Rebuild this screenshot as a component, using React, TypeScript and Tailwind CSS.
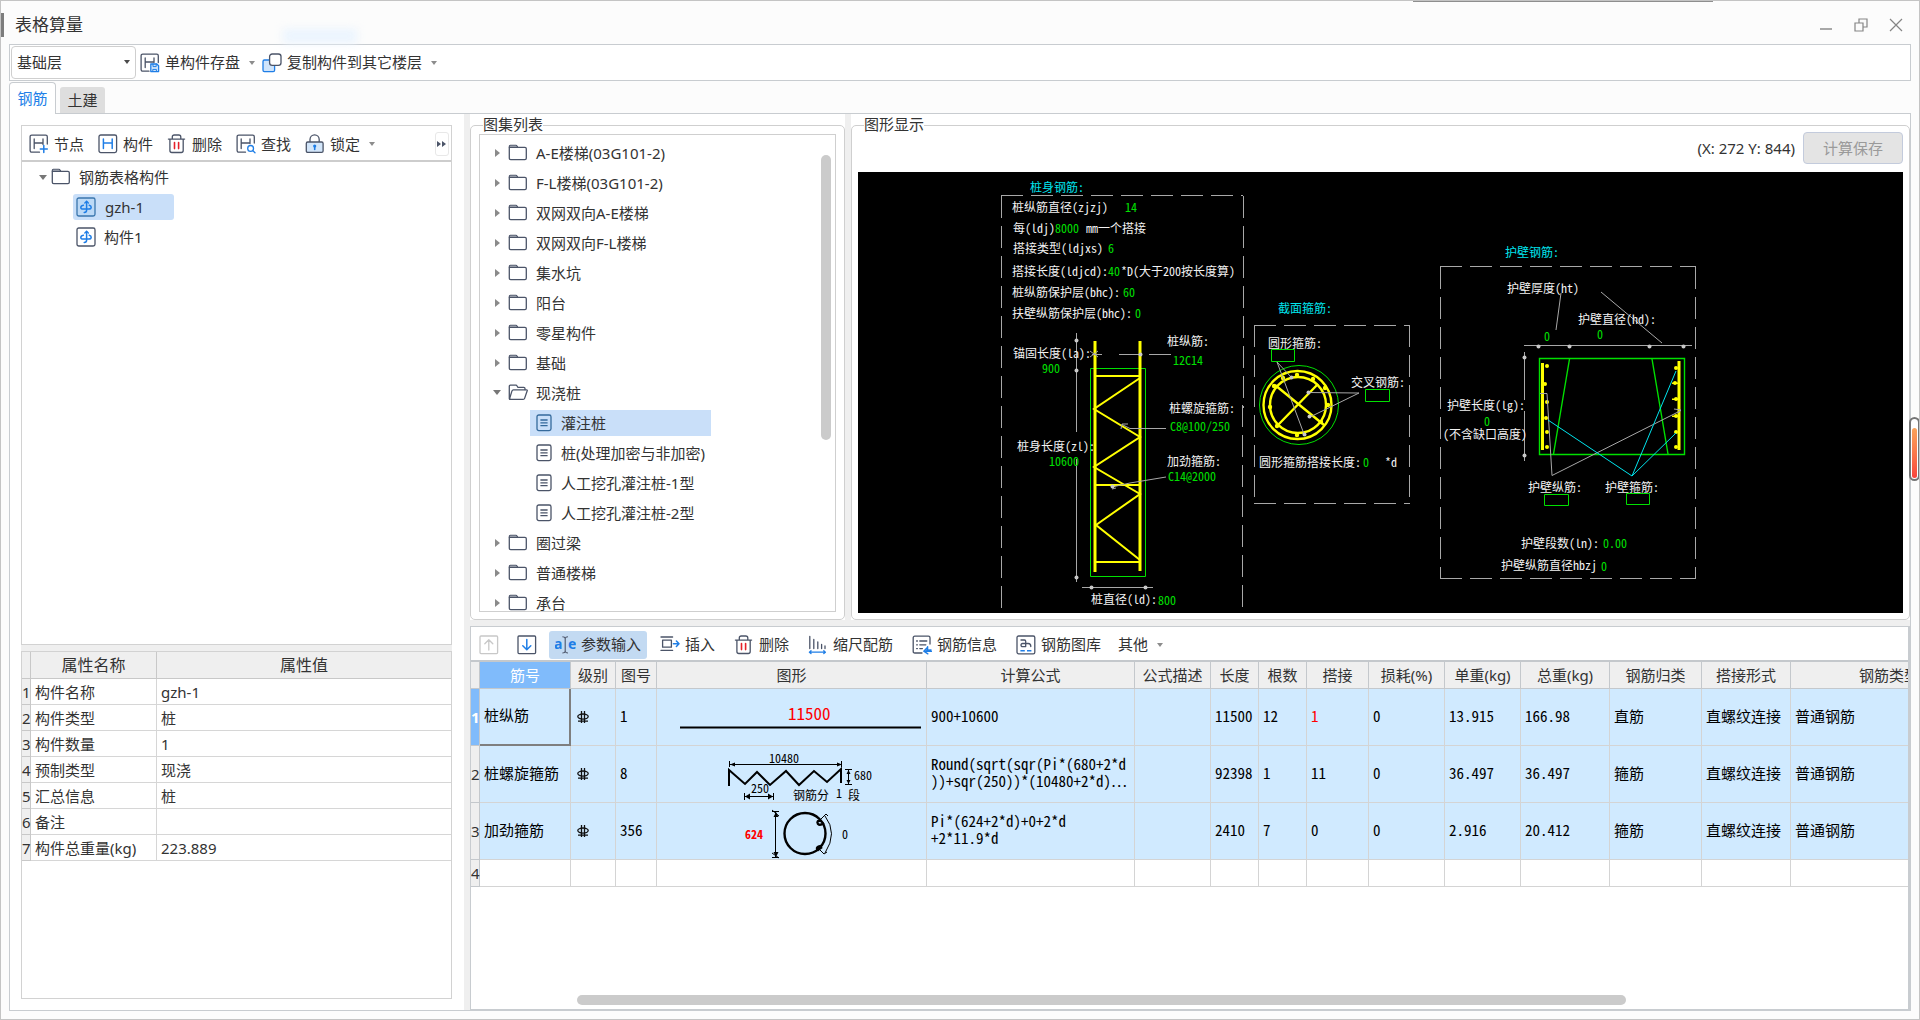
import React from 'react'
import clsx from 'clsx'

const INK = '#4b5468'
const BLUE = '#1f7ee6'

type IconProps = { children: React.ReactNode; className?: string }

function Icon({ children, className }: IconProps) {
  return (
    <svg
      viewBox="0 0 20 20"
      className={clsx('size-5 shrink-0', className)}
      fill="none"
      stroke={INK}
      strokeWidth="1.3"
      strokeLinecap="round"
      strokeLinejoin="round"
      aria-hidden="true"
    >
      {children}
    </svg>
  )
}

const NodeIcon = () => (
  <Icon>
    <path d="M10.5 18.2H2.7a1.6 1.6 0 0 1-1.6-1.6V2.7a1.6 1.6 0 0 1 1.6-1.6h14a1.6 1.6 0 0 1 1.6 1.6V10" />
    <path d="M5.2 5v9.6M14 5v5.5M5.2 9H14" />
    <path d="M14.8 11.6v7M11.3 15.1h7" stroke={BLUE} strokeWidth="1.5" />
  </Icon>
)

const MemberIcon = () => (
  <Icon>
    <rect x="1" y="1" width="17.6" height="17.6" rx="1.8" />
    <path d="M5.4 5v9.6M14.2 5v9.6M5.4 9h8.8" stroke={BLUE} strokeWidth="1.5" />
  </Icon>
)

const TrashIcon = () => (
  <Icon>
    <path d="M1.4 5.1h16.2M5.3 5V3q0-2 2-2h4.5q2 0 2 2v2M2.9 5.3v11.2q0 2 2 2h9.3q2 0 2-2V5.3" />
    <path d="M7.5 8.6v6M11.6 8.6v6" stroke="#e5202a" strokeWidth="1.6" />
  </Icon>
)

const FindIcon = () => (
  <Icon>
    <path d="M9.5 18.2H2.7a1.6 1.6 0 0 1-1.6-1.6V2.7a1.6 1.6 0 0 1 1.6-1.6h14a1.6 1.6 0 0 1 1.6 1.6V9" />
    <path d="M5.2 5v9.6M14 5v4.5M5.2 9H14" />
    <circle cx="14.6" cy="14.4" r="2.9" stroke={BLUE} />
    <path d="m16.8 16.6 2.2 2.2" stroke={BLUE} />
  </Icon>
)

const LockIcon = () => (
  <Icon>
    <path d="M5 8V5.4a4.6 4.6 0 0 1 9.2 0V8" />
    <rect x="1.3" y="8" width="16.8" height="10.4" rx="1.4" fill="#d3e6fa" />
    <circle cx="9.7" cy="12" r="1.6" fill={BLUE} stroke="none" />
    <path d="M9.7 12v3.4" stroke={BLUE} strokeWidth="1.6" />
  </Icon>
)

const SaveMemberIcon = () => (
  <Icon>
    <path d="M9 18.2H2.7a1.6 1.6 0 0 1-1.6-1.6V2.7a1.6 1.6 0 0 1 1.6-1.6h14a1.6 1.6 0 0 1 1.6 1.6V9.5" />
    <path d="M5.2 5v9.6M14 5v4.5M5.2 9H14" />
    <path d="M10.8 11h6l1.8 1.8v5.8h-7.8z" stroke={BLUE} fill="#d3e6fa" />
    <path d="M13 11v2.6h3.2V11M12.8 18.4v-2h3.6v2" stroke={BLUE} strokeWidth="1" />
  </Icon>
)

const CopyIcon = () => (
  <Icon>
    <rect x="1" y="7" width="11.6" height="11.6" rx="1.4" fill="#cfe4fb" stroke={BLUE} />
    <rect x="7.6" y="1" width="11.4" height="11.4" rx="2.6" fill="#fff" />
  </Icon>
)

const FolderIcon = () => (
  <Icon>
    <path d="M1.3 4.2V3.2q0-1 1-1h5.6q.8 0 1.2.8l.7 1.3z" fill="#cfd3da" strokeWidth="1.1" />
    <path d="M1.3 4.3h15.6q1.4 0 1.4 1.4v9.6q0 1.4-1.4 1.4H2.7q-1.4 0-1.4-1.4z" />
  </Icon>
)

const OpenFolderIcon = () => (
  <Icon>
    <path d="M2.4 16.4q-1.1 0-1.1-1.1V3.2q0-1 1-1h5.6q.8 0 1.2.8l.7 1.3h6q1.2 0 1.2 1.2v1" />
    <path d="M5.4 6.8h13.1q1 0 .7 1l-2.6 7.6q-.3 1-1.4 1H2.2q-.9 0-.6-.9l2.4-7.6q.4-1.1 1.4-1.1z" />
  </Icon>
)

const SheetIcon = ({ active }: { active?: boolean }) => (
  <svg
    viewBox="0 0 16 18"
    className="h-[18px] w-4 shrink-0"
    fill="none"
    stroke={active ? '#356a9c' : INK}
    strokeWidth="1.3"
    aria-hidden="true"
  >
    <rect x="1" y="1" width="14" height="15.6" rx="1.8" />
    <path d="M4.4 6h7.2M4.4 8.8h7.2M4.4 11.6h7.2" />
  </svg>
)

const RebarIcon = ({ active }: { active?: boolean }) => (
  <Icon>
    <rect x="1" y="1" width="18" height="18" rx="1.8" stroke={active ? '#3a76ad' : INK} fill={active ? '#bcd9f6' : '#fff'} />
    <path
      d="M10.6 4.6v8.6q0 2.2-2.4 2.2M7.4 8.2q-2.6.6-2.6 2.2 0 1.600 2.400 1.600h5.600q2.400 0 2.400-1.800 0-1.500-2-2"
      stroke={BLUE}
      strokeWidth="1.5"
    />
    <path d="M8.800 6l1.800-1.700L12.400 6" stroke={BLUE} />
  </Icon>
)

const UpIcon = () => (
  <Icon>
    <rect x="1" y="1" width="17.6" height="17.6" rx="1" stroke="#c8c8c8" />
    <path d="M9.8 15V5M5.8 8.8l4-4 4 4" stroke="#c8c8c8" />
  </Icon>
)

const DownIcon = () => (
  <Icon>
    <rect x="1" y="1" width="17.6" height="17.6" rx="1" />
    <path d="M9.8 4.6v10M5.8 10.8l4 4 4-4" stroke={BLUE} strokeWidth="1.5" />
  </Icon>
)

const ParamIcon = () => (
  <svg viewBox="0 0 21 20" className="h-5 w-[21px] shrink-0" aria-hidden="true">
    <text x="-1" y="14" fontSize="14" fontWeight="700" fill={BLUE}>
      a
    </text>
    <text x="13" y="14" fontSize="14" fontWeight="700" fill={BLUE}>
      e
    </text>
    <path
      d="M7.4 1.8q2.4 0 2.8 1.6.4-1.6 2.8-1.6M10.2 3.4v13M7.4 18q2.4 0 2.8-1.6.4 1.6 2.8 1.6"
      fill="none"
      stroke={INK}
      strokeWidth="1.1"
    />
  </svg>
)

const InsertIcon = () => (
  <Icon>
    <path d="M12.6 2H1M12.6 15.4H1M11.4 5.2H2.6v7h8.8z" />
    <path d="M13.4 8.7h5.4M16.4 6l2.6 2.7-2.6 2.7" stroke={BLUE} strokeWidth="1.5" />
  </Icon>
)

const ScaleIcon = () => (
  <Icon>
    <path d="M1.8 1.4v12.2M5.8 4.4v9.2M9.8 7v6.6M13.6 9.4v4.2M17 11v2.6" />
    <path d="M1.4 17.2h16M3 15.8l-1.6 1.4L3 18.6M15.8 15.8l1.6 1.4-1.6 1.4" stroke={BLUE} />
  </Icon>
)

const InfoIcon = () => (
  <Icon>
    <path d="M10 18H2.8q-1.6 0-1.6-1.6V2.8q0-1.6 1.6-1.6h13.6q1.6 0 1.6 1.6V9" />
    <path d="M4.6 6h.8M7.8 6h7M4.6 9.8h.8M7.8 9.8h6M4.6 13.6h.8M7.8 13.6h2.6" />
    <path d="M15.6 11.6v3M19 15l-4.2.2M15.4 12.4l-3.6 3.8 4 2.6M13 16.2h6.4" stroke={BLUE} strokeWidth="1.4" />
  </Icon>
)

const LibraryIcon = () => (
  <Icon>
    <rect x="1" y="1" width="17.8" height="17.8" rx="1.6" />
    <path d="M5 5h3.4q1.3 0 1.3 1.3v5.3H6.6q-1.6 0-1.6-1.6 0-1.5 1.6-1.5h5.6q2.6 0 2.6 3.1" />
    <path d="M4.4 15.8h4.4M11 15.8h4.4" stroke={BLUE} strokeWidth="1.6" strokeLinecap="butt" />
  </Icon>
)

const Caret = ({ className }: { className?: string }) => (
  <svg viewBox="0 0 6 4" className={clsx('h-1 w-1.5 shrink-0', className)} aria-hidden="true">
    <path d="M0 0h6L3 4z" fill="currentColor" />
  </svg>
)

function ToolButton({
  icon,
  label,
  caret,
  className,
}: {
  icon?: React.ReactNode
  label: string
  caret?: boolean
  className?: string
}) {
  return (
    <button type="button" className={clsx('flex items-center gap-[5px] whitespace-nowrap text-[15px]', className)}>
      {icon}
      <span>{label}</span>
      {caret && <Caret className="ml-1 text-[#8c8c8c]" />}
    </button>
  )
}

/* ---------- left pane ---------- */

function MemberTree() {
  return (
    <ul role="tree" aria-label="构件列表" className="text-[15px]">
      <li role="treeitem" aria-expanded="true">
        <div className="flex h-[30px] items-center pl-[17px]">
          <svg viewBox="0 0 8 5" className="h-[5px] w-2" aria-hidden="true">
            <path d="M0 0h8L4 5z" fill="#777" />
          </svg>
          <span className="ml-1 flex items-center gap-2">
            <FolderIcon />
            钢筋表格构件
          </span>
        </div>
        <ul role="group" className="pl-[51px]">
          <li role="treeitem" aria-selected="true" className="flex h-[30px] items-center">
            <button type="button" className="flex h-[26px] w-[101px] items-center gap-[9px] rounded-[3px] bg-[#c9dff9] pl-[3px]">
              <RebarIcon active />
              gzh-1
            </button>
          </li>
          <li role="treeitem" className="flex h-[30px] items-center">
            <button type="button" className="flex h-[26px] items-center gap-2 pl-[3px]">
              <RebarIcon />
              构件1
            </button>
          </li>
        </ul>
      </li>
    </ul>
  )
}

const properties: [string, string][] = [
  ['构件名称', 'gzh-1'],
  ['构件类型', '桩'],
  ['构件数量', '1'],
  ['预制类型', '现浇'],
  ['汇总信息', '桩'],
  ['备注', ''],
  ['构件总重量(kg)', '223.889'],
]

function PropertyTable() {
  return (
    <table className="w-full table-fixed border-separate border-spacing-0 text-[15px] leading-5">
      <colgroup>
        <col className="w-[9px]" />
        <col className="w-[126px]" />
        <col />
      </colgroup>
      <thead>
        <tr className="h-[27px] bg-[#efefef] text-base">
          <th className="border-r border-b border-[#c8c8c8]" />
          <th className="border-r border-b border-[#c8c8c8] font-normal">属性名称</th>
          <th className="border-b border-[#c8c8c8] font-normal">属性值</th>
        </tr>
      </thead>
      <tbody>
        {properties.map(([name, value], i) => (
          <tr key={name} className="h-[26px]">
            <th className="border-r border-b border-[#c8c8c8] bg-[#efefef] p-0 font-normal">{i + 1}</th>
            <td className="border-r border-b border-[#d6d6d6] pl-1">{name}</td>
            <td className="border-b border-[#d6d6d6] pl-1">{value}</td>
          </tr>
        ))}
      </tbody>
    </table>
  )
}

function LeftPane() {
  return (
    <div className="flex w-[454px] shrink-0 flex-col bg-white py-[11px] pr-3 pl-[11px]">
      <section className="flex flex-1 flex-col border border-[#d2d2d2]">
        <div className="flex h-[36px] items-center gap-[14px] border-b-2 border-[#cdcdcd] pt-0.5 pr-0.5 pl-[7px]">
          <ToolButton icon={<NodeIcon />} label="节点" />
          <ToolButton icon={<MemberIcon />} label="构件" />
          <ToolButton icon={<TrashIcon />} label="删除" />
          <ToolButton icon={<FindIcon />} label="查找" />
          <ToolButton icon={<LockIcon />} label="锁定" caret />
          <button
            type="button"
            aria-label="更多"
            className="ml-auto flex h-6 w-3.5 items-center justify-center rounded-[3px] border border-[#e8e8e8]"
          >
            <svg viewBox="0 0 10 6" className="h-1.5 w-2.5 shrink-0" aria-hidden="true">
              <path d="M0 0l4 3-4 3zM5 0l4 3-4 3z" fill={INK} />
            </svg>
          </button>
        </div>
        <MemberTree />
      </section>
      <div className="h-1.5 bg-[#efefef]" />
      <section className="h-[348px] shrink-0 border border-[#d2d2d2]">
        <PropertyTable />
      </section>
    </div>
  )
}

/* ---------- atlas list ---------- */

type Atlas = { name: string; children?: string[] }

const atlases: Atlas[] = [
  { name: 'A-E楼梯(03G101-2)' },
  { name: 'F-L楼梯(03G101-2)' },
  { name: '双网双向A-E楼梯' },
  { name: '双网双向F-L楼梯' },
  { name: '集水坑' },
  { name: '阳台' },
  { name: '零星构件' },
  { name: '基础' },
  { name: '现浇桩', children: ['灌注桩', '桩(处理加密与非加密)', '人工挖孔灌注桩-1型', '人工挖孔灌注桩-2型'] },
  { name: '圈过梁' },
  { name: '普通楼梯' },
  { name: '承台' },
]

function Group({ title, className, children }: { title: string; className?: string; children: React.ReactNode }) {
  return (
    <section className={clsx('relative flex flex-col rounded-[5px] border border-[#cfcfcf] bg-white', className)}>
      <h2 className="absolute -top-3 left-3 bg-white text-[15px] leading-5">{title}</h2>
      {children}
    </section>
  )
}

function AtlasList() {
  return (
    <Group title="图集列表" className="w-[375px] shrink-0 px-2 pt-2 pb-[7px]">
      <div className="relative min-h-0 flex-1 overflow-hidden border border-[#cfcfcf]">
        <ul role="tree" aria-label="图集列表" className="pt-[3px] text-[15px]">
          {atlases.map((atlas) => (
            <li key={atlas.name} role="treeitem" aria-expanded={!!atlas.children}>
              <div className="flex h-[30px] items-center pl-[13px]">
                {atlas.children ? (
                  <svg viewBox="0 0 8 8" className="mr-[5px] size-2" aria-hidden="true">
                    <path d="M0 1h8L4 6z" fill="#777" />
                  </svg>
                ) : (
                  <svg viewBox="0 0 8 8" className="mr-[5px] size-2" aria-hidden="true">
                    <path d="M2 0l5 4-5 4z" fill="#8a8a8a" />
                  </svg>
                )}
                <span className="ml-0.5 flex items-center gap-2">
                  {atlas.children ? <OpenFolderIcon /> : <FolderIcon />}
                  {atlas.name}
                </span>
              </div>
              {atlas.children && (
                <ul role="group" className="pl-[50px]">
                  {atlas.children.map((child, i) => (
                    <li key={child} role="treeitem" aria-selected={i === 0} className="flex h-[30px] items-center">
                      <button
                        type="button"
                        className={clsx('flex h-[26px] w-[181px] items-center gap-[9px] whitespace-nowrap pl-1.5', i === 0 && 'bg-[#c9dff9]')}
                      >
                        <SheetIcon active={i === 0} />
                        {child}
                      </button>
                    </li>
                  ))}
                </ul>
              )}
            </li>
          ))}
        </ul>
        <div className="absolute top-5 right-1 h-[285px] w-2.5 rounded-full bg-[#cbcbcb]" />
      </div>
    </Group>
  )
}

/* ---------- drawing canvas ---------- */

const WHITE = '#f2f2f2'
const GREEN = '#00e000'
const CYAN = '#00e5ee'
const YELLOW = '#ffff00'
const GREY = '#a8a8a8'

const labels: [number, number, string, string][] = [
  [1030, 187, CYAN, '桩身钢筋:'],
  [1012, 207, WHITE, '桩纵筋直径(zjzj)'],
  [1125, 207, GREEN, '14'],
  [1013, 228, WHITE, '每(ldj)'],
  [1055, 228, GREEN, '8000'],
  [1086, 228, WHITE, 'mm一个搭接'],
  [1013, 248, WHITE, '搭接类型(ldjxs)'],
  [1108, 248, GREEN, '6'],
  [1012, 271, WHITE, '搭接长度(ldjcd):'],
  [1108, 271, GREEN, '40'],
  [1121, 271, WHITE, '*D(大于200按长度算)'],
  [1012, 292, WHITE, '桩纵筋保护层(bhc):'],
  [1123, 292, GREEN, '60'],
  [1012, 313, WHITE, '扶壁纵筋保护层(bhc):'],
  [1135, 313, GREEN, '0'],
  [1013, 353, WHITE, '锚固长度(la):'],
  [1042, 368, GREEN, '900'],
  [1167, 341, WHITE, '桩纵筋:'],
  [1173, 360, GREEN, '12C14'],
  [1169, 408, WHITE, '桩螺旋箍筋:'],
  [1170, 426, GREEN, 'C8@100/250'],
  [1167, 461, WHITE, '加劲箍筋:'],
  [1168, 476, GREEN, 'C14@2000'],
  [1017, 446, WHITE, '桩身长度(zl):'],
  [1049, 461, GREEN, '10600'],
  [1091, 599, WHITE, '桩直径(ld):'],
  [1158, 600, GREEN, '800'],
  [1278, 308, CYAN, '截面箍筋:'],
  [1268, 343, WHITE, '圆形箍筋:'],
  [1351, 382, WHITE, '交叉钢筋:'],
  [1259, 462, WHITE, '圆形箍筋搭接长度:'],
  [1363, 462, GREEN, '0'],
  [1385, 462, WHITE, '*d'],
  [1505, 252, CYAN, '护壁钢筋:'],
  [1507, 288, WHITE, '护壁厚度(ht)'],
  [1578, 319, WHITE, '护壁直径(hd):'],
  [1544, 336, GREEN, '0'],
  [1597, 334, GREEN, '0'],
  [1447, 405, WHITE, '护壁长度(lg):'],
  [1484, 421, GREEN, '0'],
  [1443, 434, WHITE, '(不含缺口高度)'],
  [1528, 487, WHITE, '护壁纵筋:'],
  [1605, 487, WHITE, '护壁箍筋:'],
  [1521, 543, WHITE, '护壁段数(ln):'],
  [1603, 543, GREEN, '0.00'],
  [1501, 565, WHITE, '护壁纵筋直径hbzj'],
  [1601, 566, GREEN, '0'],
]

const dimensionDots: [number, number][] = [
  [1076, 340], [1076, 370], [1076, 577], [1091, 587], [1145, 587], [1112, 486], [1140, 354],
  [1291, 377], [1304, 434], [1308, 392], [1309, 416],
  [1538, 346], [1569, 346], [1649, 346], [1683, 346], [1524, 357], [1524, 455],
]

const wallDots: [number, number][] = [
  [1547, 366], [1545, 384], [1547, 402], [1546, 418], [1547, 432], [1547, 447],
  [1676, 368], [1675, 383], [1676, 399], [1676, 416], [1676, 432], [1676, 447],
]

const ringDots: [number, number][] = [
  [1297, 375], [1313, 379], [1325, 388], [1328, 405], [1321, 422], [1297, 435],
  [1277, 426], [1270, 407], [1274, 386], [1283, 378],
]

function DrawingCanvas() {
  return (
    <svg
      className="min-h-0 w-full flex-1 bg-black font-[Noto_Sans_Mono_CJK_SC,Noto_Sans_CJK_SC,monospace]"
      fill="none"
      role="img"
      aria-label="灌注桩参数图"
    >
      <g transform="translate(-858 -172)">
        <g stroke={GREY} strokeDasharray="22 8">
          <path d="M1001 195.5H1243" />
          <path d="M1001.5 196V608" />
          <path d="M1243.5 196V408" />
          <path d="M1242.5 405V608" />
          <path d="M1254 325.5H1410M1254 503.5H1410M1254.5 325V500M1409.5 325V500" />
          <path d="M1440 266.5H1696M1440 578.5H1696M1440.5 267V578M1695.5 267V578" />
        </g>

        <g stroke={GREEN}>
          <path d="M1090.5 368.5h55v208h-55z" />
          <path d="M1271.5 349.5h23v12h-23zM1365.5 389.5h24v12h-24z" />
          <circle cx="1299" cy="405" r="39.5" />
          <path d="M1539.5 358.5h145v96h-145z" strokeWidth="1.4" />
          <path d="M1569.5 359l-16 95M1652 359l16 95" strokeWidth="1.4" />
          <path d="M1544.5 494.5h24v11h-24zM1626.5 493.5h23v11h-23z" />
        </g>

        <g stroke={YELLOW}>
          <path d="M1095 341v231M1140 341v230" strokeWidth="3" />
          <path d="M1095 376h45M1095 485h45M1095 562h45M1140 378l-46 31 46 28-46 30 46 27-44 31 44 35" strokeWidth="2" />
          <circle cx="1297.5" cy="405" r="34" strokeWidth="2.4" />
          <circle cx="1298" cy="405" r="28" strokeWidth="2.4" />
          <path d="M1275 385l49 40M1318 384l-41 42" strokeWidth="2.4" />
          <path d="M1542.5 363v87M1679 361v89" strokeWidth="3" />
        </g>
        <g fill={YELLOW}>
          {ringDots.map(([x, y]) => (
            <circle key={`${x}-${y}`} cx={x} cy={y} r="2.2" />
          ))}
          {wallDots.map(([x, y]) => (
            <circle key={`${x}-${y}`} cx={x} cy={y} r="2" />
          ))}
          <path d="M1672 384h6v-1.5h-6zM1672 400h6v-1.5h-6zM1672 417h6v-1.5h-6z" />
        </g>

        <g stroke={GREY}>
          <path d="M1076.5 333V432M1076.5 459V582" />
          <path d="M1092 354.5h10M1119 354.5h21M1149 354.5h22M1090 351l8 6M1090 357l8-6" />
          <path d="M1166 428.5h-36l-8-4M1121 429l1-5h6M1166 477l-36 6-18 4M1112 489l4-1" />
          <path d="M1082 587.5h71" />
          <path d="M1277 362l14 15M1277 362l27 72M1307 392.5l52 .5-49 24" />
          <path d="M1561 293l-5 37M1601 292l61 51M1524 345.5h168" />
          <path d="M1524.5 352V400M1524.5 411V461" />
          <path d="M1540 393.5h7l5 82 129-65M1674 409l7 1-3 3" />
        </g>
        <g fill="#c8c8c8">
          {dimensionDots.map(([x, y]) => (
            <circle key={`${x}-${y}`} cx={x + 0.5} cy={y + 0.5} r="2" />
          ))}
        </g>
        <path d="M1548 420l84 56 44-105M1632 476l44-43" stroke={CYAN} />

        <g fontSize="12">
          {labels.map(([x, y, color, text]) => (
            <text key={`${x}-${y}`} x={x} y={y + 5} fill={color}>
              {text}
            </text>
          ))}
        </g>
      </g>
    </svg>
  )
}

function DrawingGroup() {
  return (
    <Group title="图形显示" className="min-w-0 flex-1 px-1.5 pt-1.5 pb-1.5">
      <div className="mb-2 flex items-center justify-end gap-2 text-[15px]">
        <output>(X: 272 Y: 844)</output>
        <button type="button" disabled className="h-8 w-[100px] rounded-[4px] border border-[#c3cbdc] bg-[#e4e4e4] text-[#9a9a9a]">
          计算保存
        </button>
      </div>
      <DrawingCanvas />
    </Group>
  )
}

/* ---------- rebar table ---------- */

function StraightShape() {
  return (
    <svg className="block h-14 w-[269px]" viewBox="657 689 269 56" fill="none" aria-label="直筋 11500">
      <text x="788" y="720" fontSize="17" fill="#f00">
        11500
      </text>
      <path d="M680 727.5h241" stroke="#000" strokeWidth="2" />
    </svg>
  )
}

function SpiralShape() {
  return (
    <svg className="block h-14 w-[269px]" viewBox="657 746 269 56" fill="none" stroke="#000" aria-label="螺旋箍筋">
      <g fill="#000" stroke="none" fontSize="12">
        <text x="769" y="763">10480</text>
        <text x="854" y="780">680</text>
        <text x="751" y="793">250</text>
        <text x="793" y="800">钢筋分</text>
        <text x="836" y="798">1</text>
        <text x="848" y="800">段</text>
        <path d="M730 764.5l5-2v4zM842 764.5l-5-2v4zM745 796.5l5-3v6zM773 796.5l-5-3v6zM848.5 770l-2 4h4zM848.5 784l-2-4h4z" />
      </g>
      <path d="M729.5 761v6M841.5 761v6M729 764.5h113M744.5 793v7M773.5 793v7M744 796.5h29M845 769.5h7M845 784.5h7M848.5 770v14" />
      <path d="M729 786v-16l16 14 12-12 13 13 16-14 13 14 15-14 13 11 14-13v14" strokeWidth="2" />
    </svg>
  )
}

function HoopShape() {
  return (
    <svg className="block h-14 w-[269px]" viewBox="657 803 269 56" fill="none" stroke="#000" aria-label="圆形箍筋">
      <g stroke="none" fontSize="12">
        <text x="745" y="839" fill="#f00" fontWeight="700">
          624
        </text>
        <text x="842" y="839" fill="#000">
          0
        </text>
        <path d="M776 812l-2.5 5h5zM776 857l-2.5-5h5z" fill="#000" />
      </g>
      <path d="M775.5 811v46M772 811.5h7M772 857.5h7M772 810l7 6M772 853l7 5" />
      <circle cx="805" cy="833.5" r="20.5" strokeWidth="2.4" />
      <path d="M821 821q-5-1-3 3 2 2 6-1M821 846q-6 1-3 4l4-3" strokeWidth="2.4" />
      <path d="M820 820l6-6 2 2M820 850l4 4 3-2M825 816q13 17 0 37" />
    </svg>
  )
}

function GradeMark() {
  return (
    <svg viewBox="0 0 12 12" className="size-3" fill="none" stroke="#111" strokeWidth="1.3" aria-label="三级钢">
      <path d="M4.5 0v12M7.5 0v12M1 10.2h10" />
      <ellipse cx="6" cy="5.6" rx="5.2" ry="2.6" />
    </svg>
  )
}

const columns: [string, string][] = [
  ['筋号', 'w-[91px]'],
  ['级别', 'w-[45px]'],
  ['图号', 'w-[41px]'],
  ['图形', 'w-[270px]'],
  ['计算公式', 'w-[208px]'],
  ['公式描述', 'w-[76px]'],
  ['长度', 'w-[48px]'],
  ['根数', 'w-[48px]'],
  ['搭接', 'w-[62px]'],
  ['损耗(%)', 'w-[76px]'],
  ['单重(kg)', 'w-[76px]'],
  ['总重(kg)', 'w-[89px]'],
  ['钢筋归类', 'w-[92px]'],
  ['搭接形式', 'w-[89px]'],
  ['钢筋类型', 'w-[197px]'],
]

type Rebar = {
  name: string
  code: string
  shape: React.ReactNode
  formula: string[]
  length: string
  count: string
  lap: string
  unit: string
  total: string
  kind: string
}

const rebars: Rebar[] = [
  {
    name: '桩纵筋', code: '1', shape: <StraightShape />, formula: ['900+10600'],
    length: '11500', count: '12', lap: '1', unit: '13.915', total: '166.98', kind: '直筋',
  },
  {
    name: '桩螺旋箍筋', code: '8', shape: <SpiralShape />,
    formula: ['Round(sqrt(sqr(Pi*(680+2*d', '))+sqr(250))*(10480+2*d)⋯'],
    length: '92398', count: '1', lap: '11', unit: '36.497', total: '36.497', kind: '箍筋',
  },
  {
    name: '加劲箍筋', code: '356', shape: <HoopShape />, formula: ['Pi*(624+2*d)+0+2*d', '+2*11.9*d'],
    length: '2410', count: '7', lap: '0', unit: '2.916', total: '20.412', kind: '箍筋',
  },
]

const cell = 'border-r border-b border-[#d4d4d4] p-0 pb-1 pl-1'

function RebarTable() {
  return (
    <table className="w-[1517px] table-fixed border-separate border-spacing-0 whitespace-nowrap text-[15px] leading-[17px]">
      <colgroup>
        <col className="w-[9px]" />
        {columns.map(([title, width]) => (
          <col key={title} className={width} />
        ))}
      </colgroup>
      <thead>
        <tr className="h-[27px] bg-[#efefef]">
          <th className="border-r border-b border-[#c4c8cc]" />
          {columns.map(([title], i) => (
            <th
              key={title}
              className={clsx(
                'border-r border-b border-[#c4c8cc] p-0 font-normal',
                i === 0 && 'bg-[#80bbfb] font-bold text-white',
              )}
            >
              {title}
            </th>
          ))}
        </tr>
      </thead>
      <tbody>
        {rebars.map((r, i) => (
          <tr
            key={r.name}
            className="h-[57px] bg-[#d0eaff] font-[Noto_Sans_Mono_CJK_SC,Noto_Sans_CJK_SC,monospace] text-black"
          >
            <th
              className={clsx(
                'border-r border-b border-[#c4c8cc] p-0 font-[Noto_Sans,Noto_Sans_CJK_SC,sans-serif]',
                i === 0 ? 'bg-[#80bbfb] font-bold text-white' : 'bg-[#efefef] font-normal text-[#333]',
              )}
            >
              {i + 1}
            </th>
            <td
              className={clsx(
                'p-0 pb-1 pl-1',
                i === 0 ? 'border-r-2 border-b-2 border-[#7f7f7f]' : 'border-r border-b border-[#d4d4d4]',
              )}
            >
              {r.name}
            </td>
            <td className="border-r border-b border-[#d4d4d4] p-0 pl-1.5">
              <GradeMark />
            </td>
            <td className={cell}>{r.code}</td>
            <td className="border-r border-b border-[#d4d4d4] p-0">{r.shape}</td>
            <td className={cell}>
              {r.formula.map((line) => (
                <div key={line}>{line}</div>
              ))}
            </td>
            <td className={cell} />
            <td className={cell}>{r.length}</td>
            <td className={cell}>{r.count}</td>
            <td className={clsx(cell, i === 0 && 'text-[#f00]')}>{r.lap}</td>
            <td className={cell}>0</td>
            <td className={cell}>{r.unit}</td>
            <td className={cell}>{r.total}</td>
            <td className={cell}>{r.kind}</td>
            <td className={cell}>直螺纹连接</td>
            <td className={cell}>普通钢筋</td>
          </tr>
        ))}
        <tr className="h-[27px]">
          <th className="border-r border-b border-[#c4c8cc] bg-[#efefef] p-0 font-normal">4</th>
          {columns.map(([title]) => (
            <td key={title} className={cell} />
          ))}
        </tr>
      </tbody>
    </table>
  )
}

function RebarPane() {
  return (
    <section className="relative flex h-[384px] shrink-0 flex-col overflow-hidden border border-r-2 border-[#c8ccd0] bg-white">
      <div className="flex h-[35px] shrink-0 items-center gap-[7px] border-b-2 border-[#c4c8cc] pt-0.5 pl-2">
        <button type="button" aria-label="上移" disabled>
          <UpIcon />
        </button>
        <button type="button" aria-label="下移" className="mr-[5px] ml-[11px]">
          <DownIcon />
        </button>
        <ToolButton icon={<ParamIcon />} label="参数输入" className="h-7 rounded-[3px] bg-[#c3daf2] px-1.5" />
        <ToolButton icon={<InsertIcon />} label="插入" className="px-1.5" />
        <ToolButton icon={<TrashIcon />} label="删除" className="px-1.5" />
        <ToolButton icon={<ScaleIcon />} label="缩尺配筋" className="px-1.5" />
        <ToolButton icon={<InfoIcon />} label="钢筋信息" className="px-1.5" />
        <ToolButton icon={<LibraryIcon />} label="钢筋图库" className="px-1.5" />
        <ToolButton label="其他" caret className="px-1" />
      </div>
      <RebarTable />
      <div className="absolute bottom-1 left-[106px] h-2.5 w-[73%] rounded-full bg-[#cbcbcb]" />
    </section>
  )
}

/* ---------- window ---------- */

export default function App() {
  return (
    <div className="relative flex h-screen min-h-[900px] flex-col overflow-hidden border border-[#c4c4c4] bg-[#fcfcfc] px-2 font-[Noto_Sans,Noto_Sans_CJK_SC,sans-serif] text-[#333]">
      <div className="absolute top-3 -left-px h-6 w-1 bg-[#7d7d7d]" />
      <div className="absolute -top-px right-[206px] h-0.5 w-[300px] bg-[#8e8e8e]" />

      <header className="relative flex h-[43px] shrink-0 items-center justify-between pt-1 pl-1.5">
        <div className="absolute top-7 left-[274px] h-3.5 w-[74px] bg-[#eaf4fe] blur-[5px]" />
        <h1 className="relative text-[17px]">表格算量</h1>
        <div className="flex items-center gap-[21px] pr-2 text-[#858585]">
          <button type="button" aria-label="最小化">
            <svg viewBox="0 0 14 14" className="size-3.5" stroke="currentColor" aria-hidden="true">
              <path d="M1 11h12" strokeWidth="1.4" />
            </svg>
          </button>
          <button type="button" aria-label="还原">
            <svg viewBox="0 0 14 14" className="size-3.5" fill="none" stroke="currentColor" strokeWidth="1.2" aria-hidden="true">
              <path d="M1 5h8v8H1zM5 5V1h8v8H9" />
            </svg>
          </button>
          <button type="button" aria-label="关闭">
            <svg viewBox="0 0 14 14" className="size-3.5" stroke="currentColor" strokeWidth="1.2" aria-hidden="true">
              <path d="M1 1l12 12M13 1L1 13" />
            </svg>
          </button>
        </div>
      </header>

      <div className="flex h-[37px] shrink-0 items-center border border-[#c8ccd0] bg-white pl-px">
        <div className="relative">
          <select
            aria-label="楼层"
            defaultValue="基础层"
            className="h-[33px] w-[125px] appearance-none rounded-[4px] border border-[#cfcfcf] bg-white pl-[5px] text-[15px]"
          >
            <option>基础层</option>
          </select>
          <Caret className="pointer-events-none absolute top-3.5 right-1.5 text-[#4a4a4a]" />
        </div>
        <ToolButton icon={<SaveMemberIcon />} label="单构件存盘" caret className="ml-1" />
        <ToolButton icon={<CopyIcon />} label="复制构件到其它楼层" caret className="ml-[7px]" />
      </div>

      <div role="tablist" className="relative z-10 flex h-8 shrink-0 items-end gap-1 text-[15px]">
        <button
          type="button"
          role="tab"
          aria-selected="true"
          className="-mb-px h-8 w-[47px] rounded-t-[4px] border border-b-0 border-[#c8ccd0] bg-white text-[#2180e8]"
        >
          钢筋
        </button>
        <button type="button" role="tab" aria-selected="false" className="h-[26px] w-[45px] rounded-t-[3px] bg-[#dedede]">
          土建
        </button>
      </div>

      <main className="mb-2 flex min-h-0 flex-1 border border-[#c8ccd0] bg-white">
        <LeftPane />
        <div className="w-1.5 shrink-0 bg-[#efefef]" />
        <div className="flex min-w-0 flex-1 flex-col">
          <div className="flex min-h-0 flex-1 pt-[11px]">
            <AtlasList />
            <div className="-mt-[11px] w-1.5 shrink-0 bg-[#efefef]" />
            <DrawingGroup />
          </div>
          <div className="h-1.5 shrink-0 bg-[#efefef]" />
          <RebarPane />
        </div>
      </main>

      <div className="absolute top-[416px] -right-px flex h-16 w-[11px] flex-col justify-end rounded-full border-2 border-[#757575] bg-white p-px">
        <div className="h-[50px] rounded-full bg-linear-to-b from-[#f9a25a] to-[#f8423c]" />
      </div>
    </div>
  )
}
